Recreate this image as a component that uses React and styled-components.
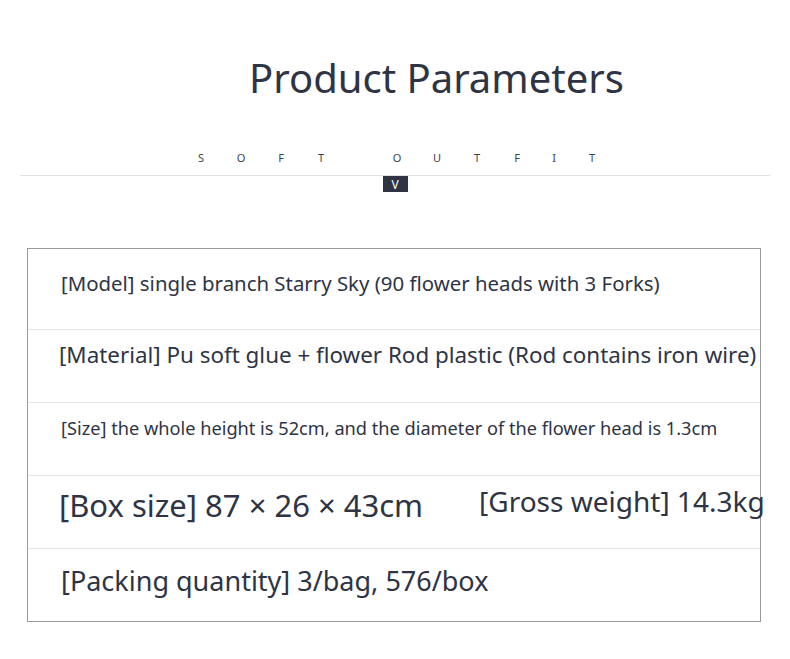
import React from "react";
import styled, { createGlobalStyle } from "styled-components";

const Global = createGlobalStyle`
  body {
    margin: 0;
    background: #ffffff;
    font-family: "Noto Sans", "Open Sans", sans-serif;
    color: #2e3444;
  }
`;

const Page = styled.div`
  width: 790px;
  height: 659px;
  padding-top: 50px;
  box-sizing: border-box;
`;

const Title = styled.h1`
  margin: 0;
  padding-left: 83px;
  text-align: center;
  font-size: 40px;
  font-weight: 400;
  line-height: 56px;
  color: #2e3444;
`;

const Letters = styled.div`
  display: flex;
  justify-content: center;
  padding-left: 4px;
  margin-top: 41px;
  height: 20px;
  align-items: center;
`;

const Letter = styled.span`
  width: ${(p) => p.$w}px;
  text-align: center;
  font-size: 11px;
  color: #3a3f4c;
`;

const Rule = styled.div`
  margin: 8px 20px 0;
  border-top: 1px solid #e2e2e2;
  display: flex;
  justify-content: center;
`;

const Badge = styled.div`
  width: 25px;
  height: 16px;
  background: #2e3444;
  color: #fff;
  font-size: 12px;
  display: flex;
  align-items: center;
  justify-content: center;
`;

const Table = styled.div`
  margin: 56px 0 0 27px;
  width: 734px;
  border: 1px solid #9a9a9a;
  box-sizing: border-box;
`;

const Row = styled.div`
  height: ${(p) => p.$h}px;
  display: flex;
  align-items: center;
  border-top: ${(p) => (p.$first ? "none" : "1px solid #e6e6e6")};
  box-sizing: border-box;
  white-space: nowrap;
`;

const Cell = styled.span`
  font-size: ${(p) => p.$size}px;
  margin-left: ${(p) => p.$left}px;
  margin-top: ${(p) => p.$dy || 0}px;
  color: #2e3444;
`;

const letters = [
  ["S", 40], ["O", 40], ["F", 40], ["T", 40], [" ", 36],
  ["O", 40], ["U", 40], ["T", 40], ["F", 40], ["I", 34], ["T", 42],
];

export default function App() {
  return (
    <>
      <Global />
      <Page>
        <Title>Product Parameters</Title>
        <Letters>
          {letters.map(([c, w], i) => (
            <Letter key={i} $w={w}>
              {c}
            </Letter>
          ))}
        </Letters>
        <Rule>
          <Badge>V</Badge>
        </Rule>
        <Table>
          <Row $h={80} $first>
            <Cell $size={20.4} $left={33} $dy={-12}>
              [Model] single branch Starry Sky (90 flower heads with 3 Forks)
            </Cell>
          </Row>
          <Row $h={73}>
            <Cell $size={22.4} $left={31} $dy={-24}>
              [Material] Pu soft glue + flower Rod plastic (Rod contains iron wire)
            </Cell>
          </Row>
          <Row $h={73}>
            <Cell $size={18.2} $left={33} $dy={-22}>
              [Size] the whole height is 52cm, and the diameter of the flower head is 1.3cm
            </Cell>
          </Row>
          <Row $h={73}>
            <Cell $size={31} $left={31} $dy={-14}>
              [Box size] 87 × 26 × 43cm
            </Cell>
            <Cell $size={28} $left={56} $dy={-22}>
              [Gross weight] 14.3kg
            </Cell>
          </Row>
          <Row $h={73}>
            <Cell $size={27} $left={33} $dy={-10}>
              [Packing quantity] 3/bag, 576/box
            </Cell>
          </Row>
        </Table>
      </Page>
    </>
  );
}
